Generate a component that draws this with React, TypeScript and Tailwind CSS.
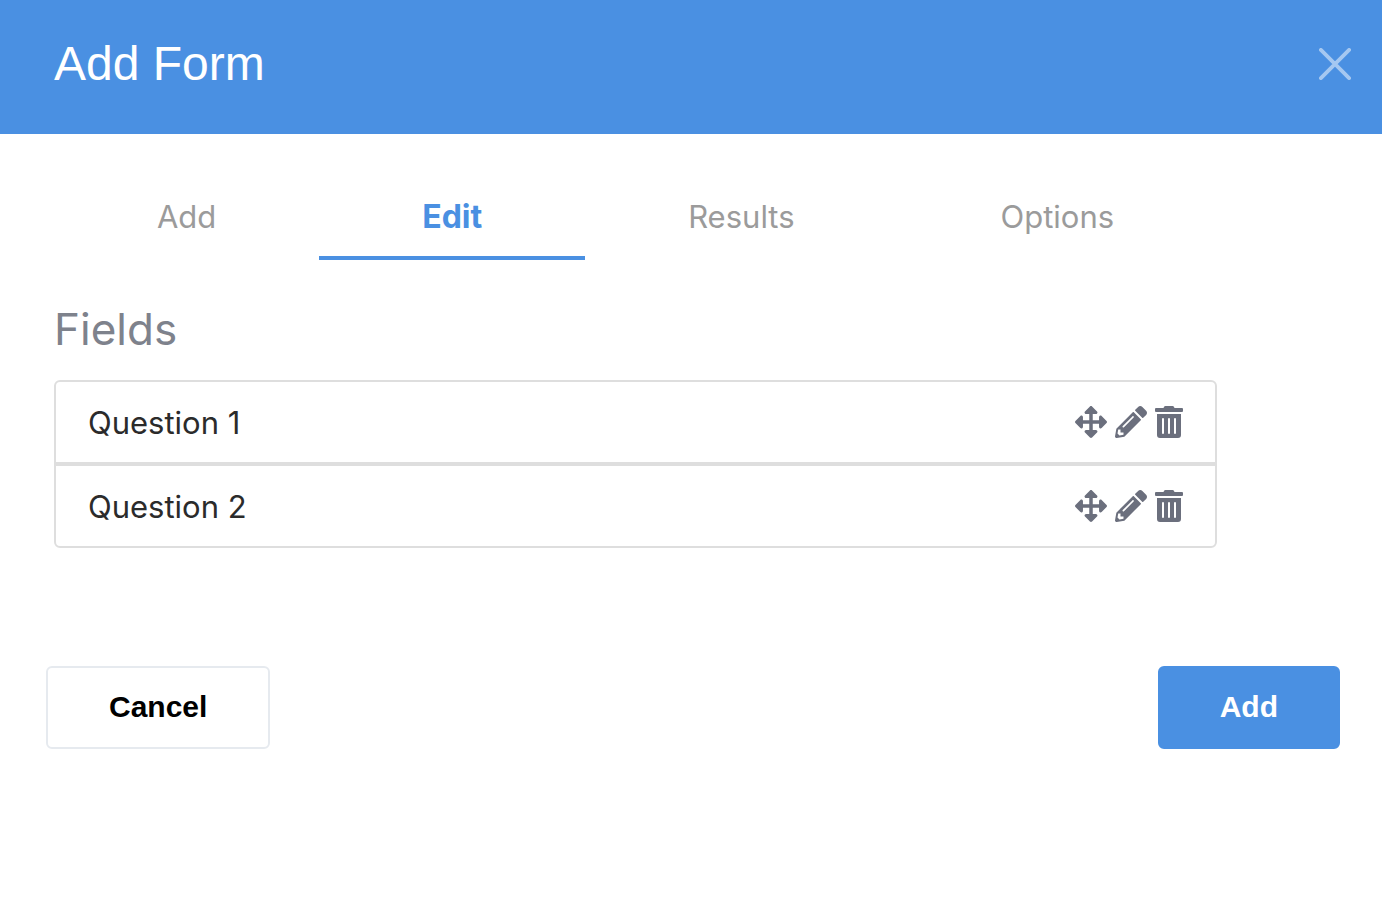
import { useState } from 'react';
import { FaArrowsAlt, FaPencilAlt, FaTrashAlt } from 'react-icons/fa';
import clsx from 'clsx';

const TABS = ['Add', 'Edit', 'Results', 'Options'];

const FIELDS = [
    { id: 1, label: 'Question 1' },
    { id: 2, label: 'Question 2' },
];

function DialogHeader({ title }: { title: string }) {
    return (
        <header className="flex h-[134px] items-start justify-between bg-[#4a90e2] pt-8 pr-[31px] pl-[54px] font-['Liberation_Sans',Arial,sans-serif]">
            <h1 className="text-5xl leading-[64px] text-white">{title}</h1>
            <button type="button" aria-label="Close" className="mt-4 text-white/50">
                <svg viewBox="0 0 32 32" className="h-8 w-8" fill="none" stroke="currentColor" strokeWidth="3.8" strokeLinecap="round">
                    <path d="M1.9 1.9 30.1 30.1M30.1 1.9 1.9 30.1" />
                </svg>
            </button>
        </header>
    );
}

function FieldRow({ label }: { label: string }) {
    return (
        <li className="flex h-[84px] items-center justify-between border-2 border-[#dedede] px-8 first:rounded-t-md last:rounded-b-md">
            <span className="pt-0.5 text-[31px] leading-10 text-[#2b2b2b]">{label}</span>
            <div className="flex gap-2 text-[#6b6f7d]">
                <button type="button" aria-label={`Move ${label}`}>
                    <FaArrowsAlt className="h-8 w-8" />
                </button>
                <button type="button" aria-label={`Edit ${label}`}>
                    <FaPencilAlt className="h-8 w-8" />
                </button>
                <button type="button" aria-label={`Delete ${label}`}>
                    <FaTrashAlt className="h-8 w-7" />
                </button>
            </div>
        </li>
    );
}

export default function App() {
    const [active, setActive] = useState('Edit');

    return (
        <div className="min-h-screen bg-white font-[Inter,sans-serif]">
            <DialogHeader title="Add Form" />

            <main className="pt-10 pr-[165px] pl-[54px]">
                {/* Tabs */}
                <nav className="flex" role="tablist">
                    {TABS.map(tab => (
                        <button
                            key={tab}
                            type="button"
                            role="tab"
                            aria-selected={tab === active}
                            onClick={() => setActive(tab)}
                            className={clsx(
                                'h-[86px] flex-auto border-b-4 pt-1 leading-10',
                                tab === active
                                    ? 'border-[#4a90e2] text-[32px] font-bold text-[#4a90e2]'
                                    : 'border-transparent text-[31px] text-[#9b9b9b]',
                            )}
                        >
                            {tab}
                        </button>
                    ))}
                </nav>

                {/* Field list */}
                <h2 className="mt-[39px] text-[44px] leading-[60px] text-[#7e828c]">Fields</h2>
                <ul className="mt-[21px]">
                    {FIELDS.map(field => (
                        <FieldRow key={field.id} label={field.label} />
                    ))}
                </ul>
            </main>

            <footer className="mt-[118px] flex justify-between pr-[42px] pl-[46px] font-['Liberation_Sans',Arial,sans-serif] text-[30px] leading-[77px] font-bold">
                <button type="button" className="rounded-md border-2 border-[#e6eaef] px-[61px] pb-0.5 text-black">
                    Cancel
                </button>
                <button type="button" className="rounded-md border-2 border-[#4a90e2] bg-[#4a90e2] px-[60px] pb-0.5 text-white">
                    Add
                </button>
            </footer>
        </div>
    );
}
